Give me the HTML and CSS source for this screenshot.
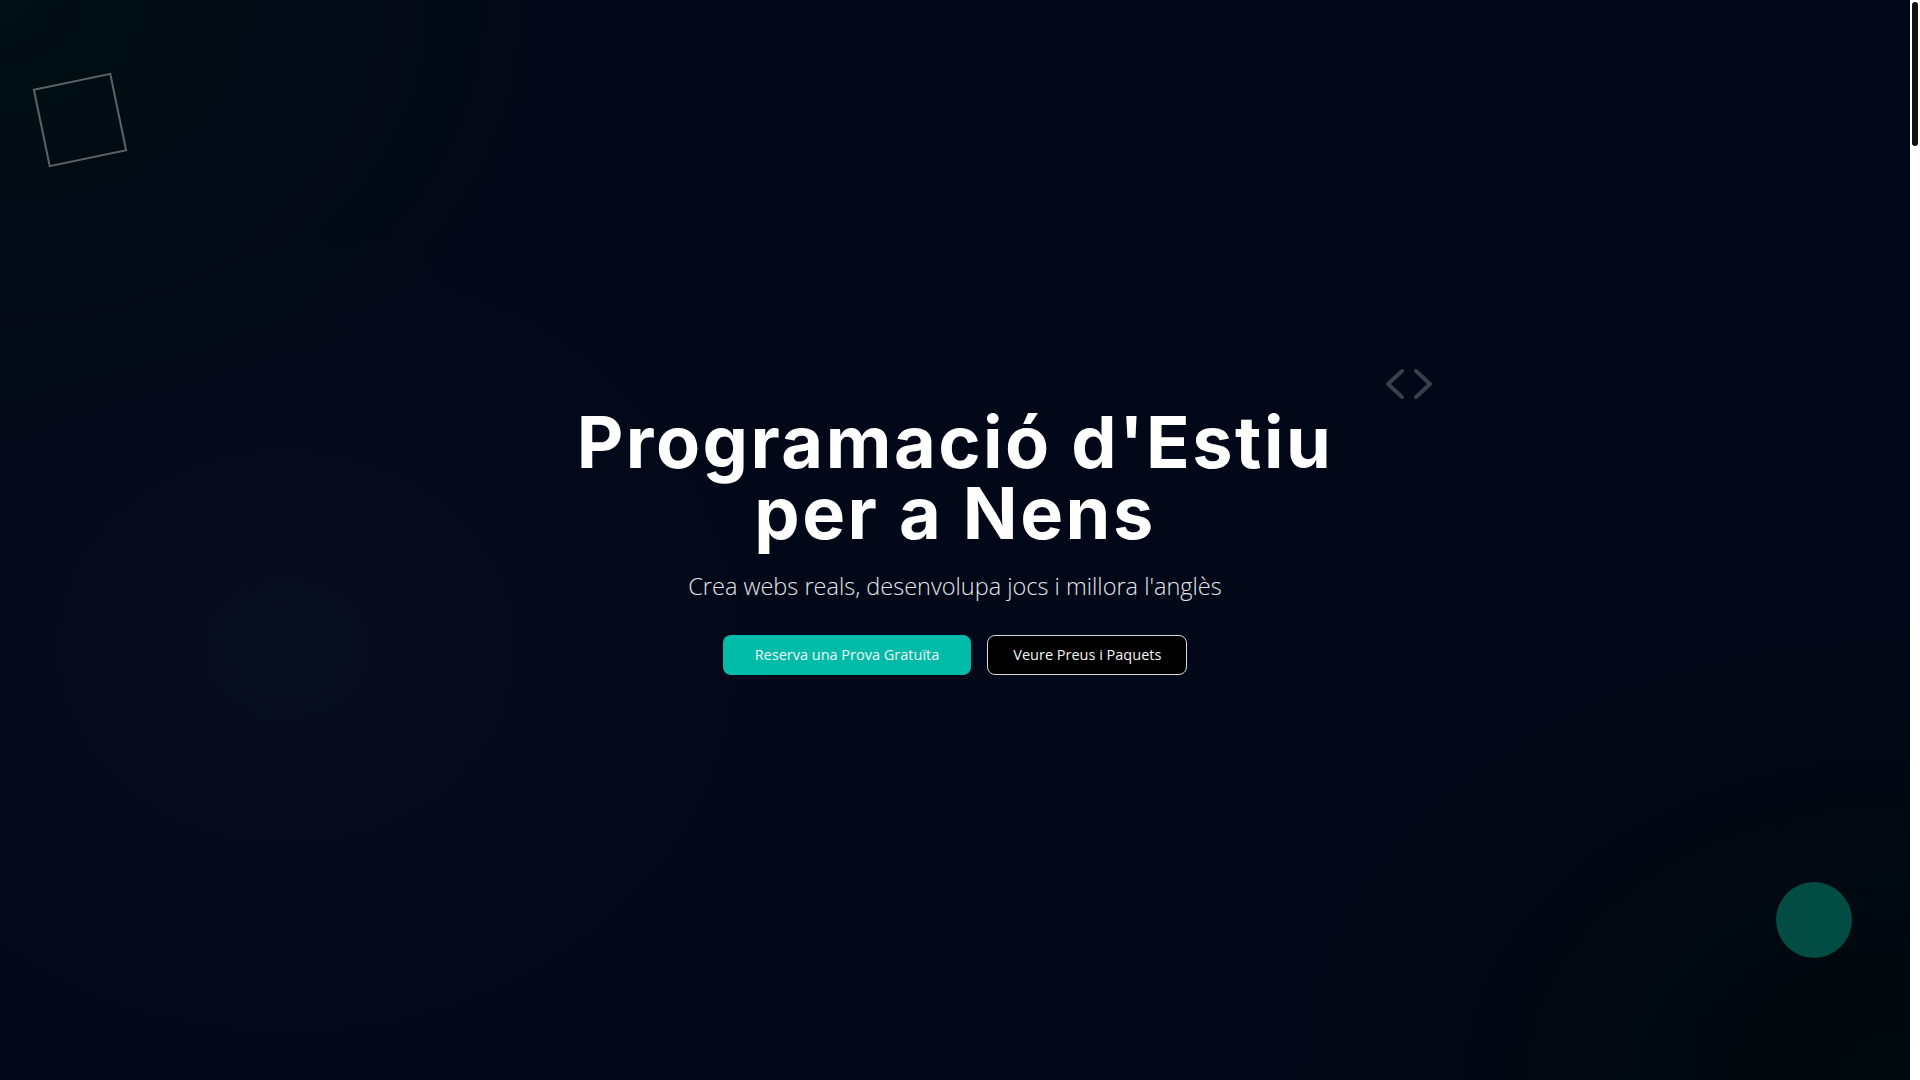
FILE: index.html
```html
<!DOCTYPE html>
<html lang="ca">
<head>
<meta charset="utf-8">
<title>Programació d'Estiu per a Nens</title>
<link rel="stylesheet" href="styles.css">
</head>
<body>
  <section class="hero">
    <div class="deco-square"></div>
    <svg class="deco-code" viewBox="0 0 50 34" width="50" height="34" aria-hidden="true">
      <path d="M18 4 L4 17 L18 30" />
      <path d="M32 4 L46 17 L32 30" />
    </svg>
    <div class="hero-content">
      <h1 class="hero-title"><span class="line">Programació d'Estiu</span><span class="line">per a Nens</span></h1>
      <p class="hero-sub">Crea webs reals, desenvolupa jocs i millora l'anglès</p>
      <div class="hero-actions">
        <a class="btn btn-primary" href="#">Reserva una Prova Gratuïta</a>
        <a class="btn btn-outline" href="#">Veure Preus i Paquets</a>
      </div>
    </div>
  </section>
  <main class="below-fold"></main>
  <button class="chat-bubble" aria-label="Xat"></button>
  <div class="scrollbar" aria-hidden="true"><div class="scrollbar-thumb"></div></div>
</body>
</html>
```

FILE: styles.css
```css
html, body {
  margin: 0;
  padding: 0;
}

html {
  background: #020816;
}

body {
  margin-right: 10px;
  font-family: "Open Sans", "Liberation Sans", sans-serif;
  color: #ffffff;
  background: #020816;
}

.scrollbar {
  position: fixed;
  top: 0;
  right: 0;
  width: 10px;
  height: 100vh;
  background: #ffffff;
}

.scrollbar-thumb {
  margin: 2px 2px 0;
  height: 144px;
  border-radius: 3px;
  background: #121212;
}

.hero {
  position: relative;
  height: 1080px;
  display: flex;
  align-items: center;
  justify-content: center;
  overflow: hidden;
  background:
    radial-gradient(ellipse 800px 650px at 0% 0%, rgba(0, 18, 16, 0.6), rgba(0, 18, 16, 0) 70%),
    radial-gradient(ellipse 900px 650px at 100% 100%, rgba(0, 10, 10, 0.85), rgba(0, 10, 10, 0) 70%),
    radial-gradient(ellipse 700px 600px at 15% 60%, rgba(10, 18, 36, 0.5), rgba(10, 18, 36, 0) 70%),
    #020817;
}

.deco-square {
  position: absolute;
  left: 40px;
  top: 80px;
  width: 76px;
  height: 76px;
  border: 2px solid rgba(255, 255, 255, 0.36);
  transform: rotate(-11.7deg);
}

.deco-code {
  position: absolute;
  left: 1384px;
  top: 367px;
}

.deco-code path {
  fill: none;
  stroke: #3a3f4b;
  stroke-width: 4;
  stroke-linecap: round;
  stroke-linejoin: round;
}

.hero-content {
  display: flex;
  flex-direction: column;
  align-items: center;
  text-align: center;
}

.hero-title {
  display: flex;
  flex-direction: column;
  align-items: center;
  margin: 0;
  font-family: "Inter", "DejaVu Sans", sans-serif;
  font-weight: 700;
  font-size: 72px;
  line-height: 71px;
  letter-spacing: 2.5px;
  color: #ffffff;
}

.hero-title .line {
  display: block;
}

.hero-sub {
  margin: 22px 0 0;
  font-family: "Open Sans", sans-serif;
  font-weight: 300;
  font-size: 23.5px;
  line-height: 32px;
  color: #e2e5e9;
}

.hero-actions {
  display: flex;
  gap: 16px;
  margin-top: 33px;
}

.btn {
  display: inline-flex;
  align-items: center;
  justify-content: center;
  height: 40px;
  box-sizing: border-box;
  border-radius: 8px;
  font-family: "Open Sans", sans-serif;
  font-size: 14.5px;
  font-weight: 400;
  color: #f2f4f5;
  text-decoration: none;
}

.btn-primary {
  padding: 0 32px;
  background: #00bba7;
}

.btn-outline {
  padding: 0 25px;
  background: #000000;
  border: 1px solid #d8dadd;
}

.below-fold {
  display: block;
  height: 6910px;
  background: #020816;
}

.chat-bubble {
  position: fixed;
  right: 68px;
  bottom: 122px;
  width: 76px;
  height: 76px;
  padding: 0;
  border: none;
  border-radius: 50%;
  background: #014d44;
}
```
